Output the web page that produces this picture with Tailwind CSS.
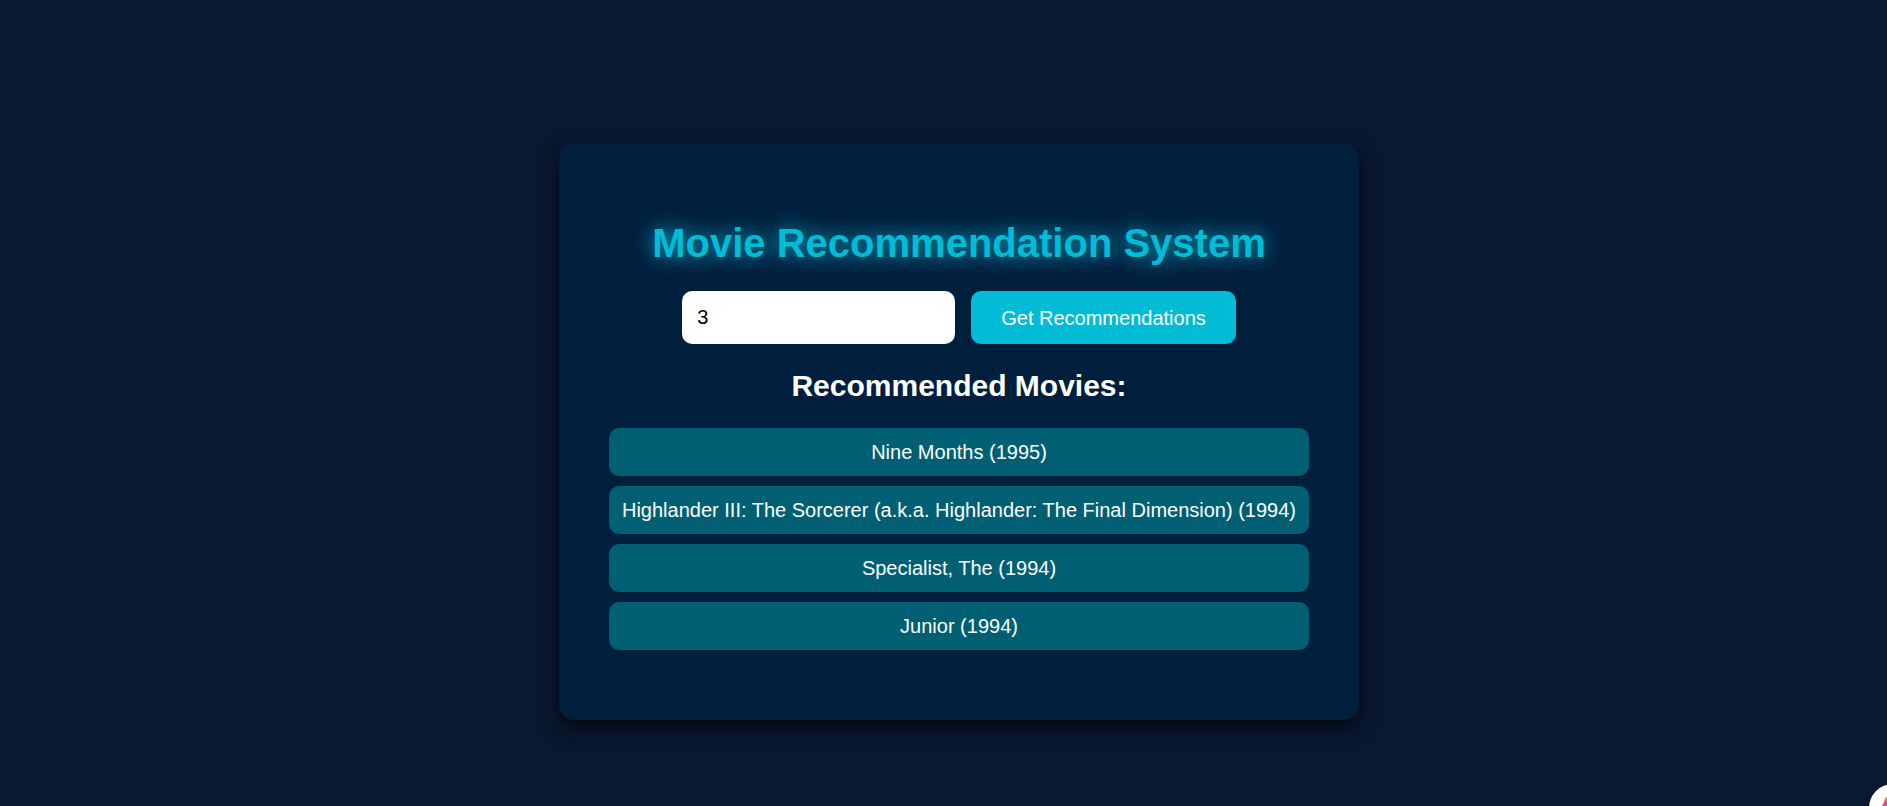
<!DOCTYPE html>
<html lang="en">
<head>
<meta charset="utf-8">
<meta name="viewport" content="width=device-width, initial-scale=1">
<title>Movie Recommendation System</title>
<script src="https://cdn.jsdelivr.net/npm/@tailwindcss/browser@4"></script>
</head>
<body class="flex min-h-screen items-center justify-center overflow-hidden bg-[#0a1830] pt-[57px] pl-[31px] font-['Liberation_Sans',Arial,sans-serif] text-xl text-white">
<main class="w-full max-w-[800px] rounded-[15px] bg-[#001f3d] px-[50px] py-[70px] text-center shadow-[0_8px_20px_rgba(0,0,0,0.7)]">
  <h1 class="text-[40px] leading-[60px] font-bold text-[#00bcd6] [text-shadow:0_0_20px_#00bcd6]">Movie Recommendation System</h1>
  <form class="mt-[18px] flex flex-wrap justify-center gap-4">
    <input type="text" aria-label="User ID" value="3" class="h-[53px] w-[273px] rounded-[10px] bg-white px-[15px] text-black">
    <button type="button" class="h-[53px] rounded-[10px] bg-[#00bcd6] px-[30px]">Get Recommendations</button>
  </form>
  <h2 class="mt-5 text-[30px] leading-11 font-bold">Recommended Movies:</h2>
  <ul class="mt-5 flex flex-col gap-[10px]">
    <li class="rounded-[10px] bg-[#005f73] p-[10px]">Nine Months (1995)</li>
    <li class="rounded-[10px] bg-[#005f73] p-[10px]">Highlander III: The Sorcerer (a.k.a. Highlander: The Final Dimension) (1994)</li>
    <li class="rounded-[10px] bg-[#005f73] p-[10px]">Specialist, The (1994)</li>
    <li class="rounded-[10px] bg-[#005f73] p-[10px]">Junior (1994)</li>
  </ul>
</main>
<button type="button" aria-label="Open assistant" class="fixed -right-[30px] -bottom-[26px] size-12 rounded-full bg-white">
  <svg viewBox="0 0 48 48" class="size-12" aria-hidden="true">
    <defs><linearGradient id="flame" x1="0" y1="0" x2="0" y2="1"><stop offset="0" stop-color="#ff9a3c"/><stop offset=".25" stop-color="#f0487f"/><stop offset=".45" stop-color="#d840e0"/><stop offset="1" stop-color="#a63df0"/></linearGradient></defs>
    <path d="M18 13 L16 14 L15 18 L13 22 L13 26 L18 35 L30 35 L35 24 L30 13 Z" fill="url(#flame)"/>
  </svg>
</button>
</body>
</html>
